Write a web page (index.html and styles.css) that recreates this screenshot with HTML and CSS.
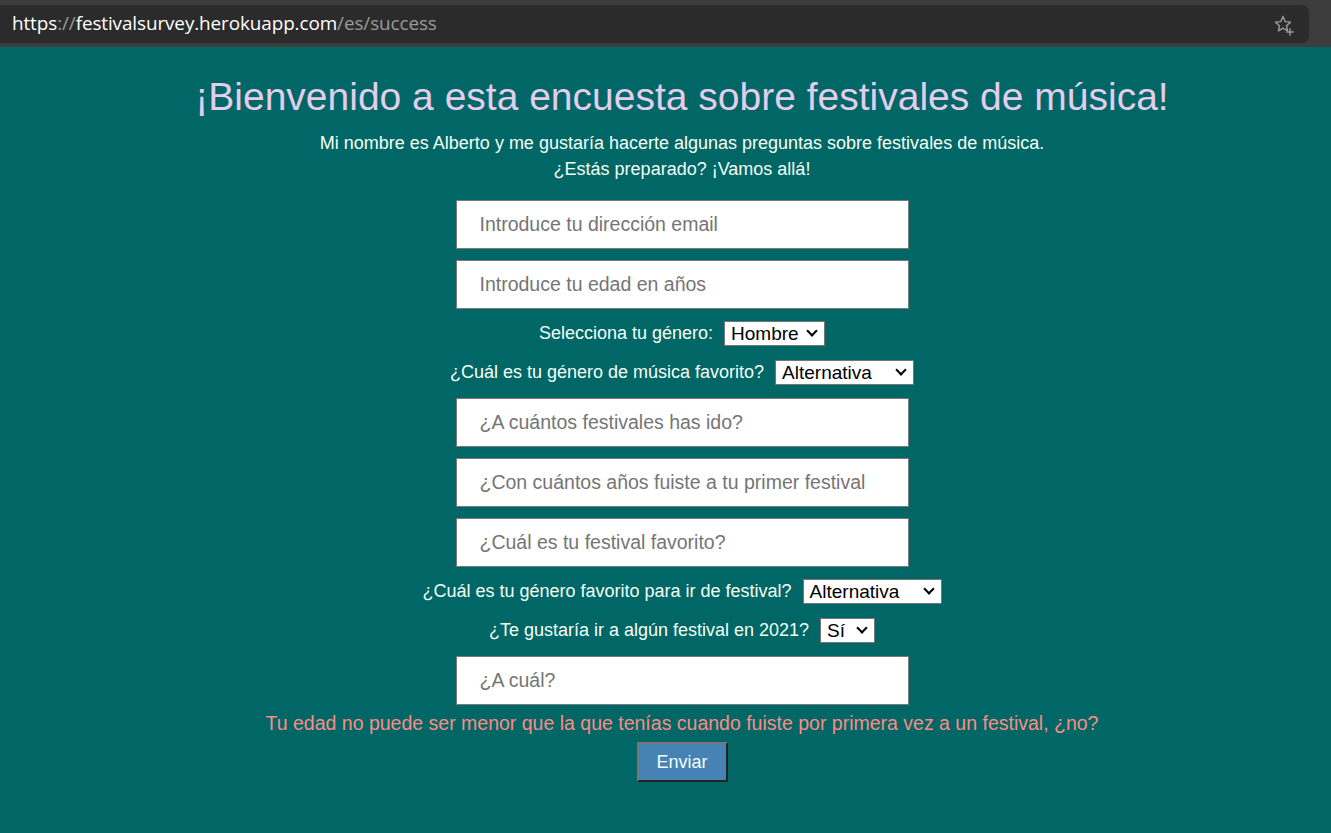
FILE: index.html
```html
<!DOCTYPE html>
<html lang="es">
<head>
<meta charset="utf-8">
<title>Festival Survey</title>
<link rel="stylesheet" href="styles.css">
</head>
<body>
<header class="chrome">
  <div class="omnibox">
    <div class="url"><span class="hl">https</span><span class="dim">://</span><span class="hl">festivalsurvey.herokuapp.com</span><span class="dim">/es/success</span></div>
    <svg class="star" width="22" height="22" viewBox="0 0 22 22" fill="none" stroke="#9b9b9b" stroke-width="1.4" stroke-linejoin="round">
      <path d="M10 2.5 L12.2 7.6 L17.6 8.1 L13.5 11.7 L14.6 17 L10 14.2 L5.4 17 L6.5 11.7 L2.4 8.1 L7.8 7.6 Z"/>
      <path d="M17 15 V21 M14 18 H20" stroke-linecap="square"/>
    </svg>
  </div>
</header>
<main class="page">
  <h1 class="title">¡Bienvenido a esta encuesta sobre festivales de música!</h1>
  <p class="intro">Mi nombre es Alberto y me gustaría hacerte algunas preguntas sobre festivales de música.<br>¿Estás preparado? ¡Vamos allá!</p>
  <form class="survey">
    <input class="field" type="text" placeholder="Introduce tu dirección email">
    <input class="field" type="text" placeholder="Introduce tu edad en años">
    <label class="row">Selecciona tu género: <span class="sel w-hombre">Hombre<i class="chev"></i></span></label>
    <label class="row">¿Cuál es tu género de música favorito? <span class="sel w-alt">Alternativa<i class="chev"></i></span></label>
    <input class="field" type="text" placeholder="¿A cuántos festivales has ido?">
    <input class="field" type="text" placeholder="¿Con cuántos años fuiste a tu primer festival">
    <input class="field" type="text" placeholder="¿Cuál es tu festival favorito?">
    <label class="row">¿Cuál es tu género favorito para ir de festival? <span class="sel w-alt">Alternativa<i class="chev"></i></span></label>
    <label class="row">¿Te gustaría ir a algún festival en 2021? <span class="sel w-si">Sí<i class="chev"></i></span></label>
    <input class="field" type="text" placeholder="¿A cuál?">
    <p class="error">Tu edad no puede ser menor que la que tenías cuando fuiste por primera vez a un festival, ¿no?</p>
    <button class="submit" type="button">Enviar</button>
  </form>
</main>
</body>
</html>
```

FILE: styles.css
```css
html, body {
  margin: 0;
  padding: 0;
  height: 100%;
}
body {
  background: #006666;
  font-family: "Liberation Sans", Arial, sans-serif;
  display: flex;
  flex-direction: column;
  overflow: hidden;
}
.chrome {
  background: #3c3c3c;
  height: 47px;
  padding-top: 5px;
  box-sizing: border-box;
  flex: none;
}
.omnibox {
  width: 1309px;
  height: 38px;
  background: #2b2b2b;
  border-radius: 0 7px 7px 0;
  display: flex;
  align-items: center;
  justify-content: space-between;
  padding: 0 14px 0 12px;
  box-sizing: border-box;
}
.url {
  font-family: "Open Sans", "Noto Sans", sans-serif;
  font-size: 18.9px;
  letter-spacing: -0.1px;
  color: #9a9a9a;
  padding-bottom: 2px;
}
.url .hl { color: #ffffff; }
.url .dim { color: #9a9a9a; }
.star { display: block; margin-top: 2px; }

.page {
  flex: 1;
  display: flex;
  flex-direction: column;
  align-items: center;
  padding-left: 33px;
}
.title {
  margin: 27px 0 0;
  font-size: 39px;
  font-weight: normal;
  line-height: 46px;
  color: #e3cdeb;
}
.intro {
  margin: 10px 0 0;
  font-size: 18px;
  line-height: 26px;
  color: #f4fff6;
  text-align: center;
}
.survey {
  display: flex;
  flex-direction: column;
  align-items: center;
  margin-top: 18px;
}
.field {
  width: 453px;
  height: 49px;
  box-sizing: border-box;
  border: 1px solid #7a7a7a;
  padding: 0 23px;
  font-family: "Liberation Sans", Arial, sans-serif;
  font-size: 19.5px;
  background: #fff;
  margin-bottom: 11px;
  outline: none;
}
.field::placeholder { color: #757575; }
.row {
  display: flex;
  align-items: center;
  font-size: 18px;
  color: #f4fff6;
  height: 25px;
  margin-bottom: 13px;
  margin-top: 1px;
  white-space: pre;
}
.sel {
  margin-left: 6px;
  height: 25px;
  box-sizing: border-box;
  background: #fff;
  border: 1px solid #767676;
  color: #000;
  font-size: 19px;
  display: flex;
  align-items: center;
  justify-content: space-between;
  padding: 0 6px 0 6px;
}
.w-hombre { width: 101px; }
.w-alt { width: 139px; }
.w-si { width: 55px; }
.chev {
  width: 6px;
  height: 6px;
  border-right: 2px solid #000;
  border-bottom: 2px solid #000;
  transform: rotate(45deg);
  margin-top: -5px;
  margin-right: 2px;
}
.error {
  margin: -4px 0 0;
  font-size: 19.5px;
  line-height: 22px;
  color: #fa8c84;
}
.submit {
  margin-top: 8px;
  width: 91px;
  height: 40px;
  background: #4682b4;
  color: #f0ffff;
  font-family: "Liberation Sans", Arial, sans-serif;
  font-size: 18px;
  border: 2px solid;
  border-color: #767676 #222 #222 #767676;
  padding: 0;
}
```
